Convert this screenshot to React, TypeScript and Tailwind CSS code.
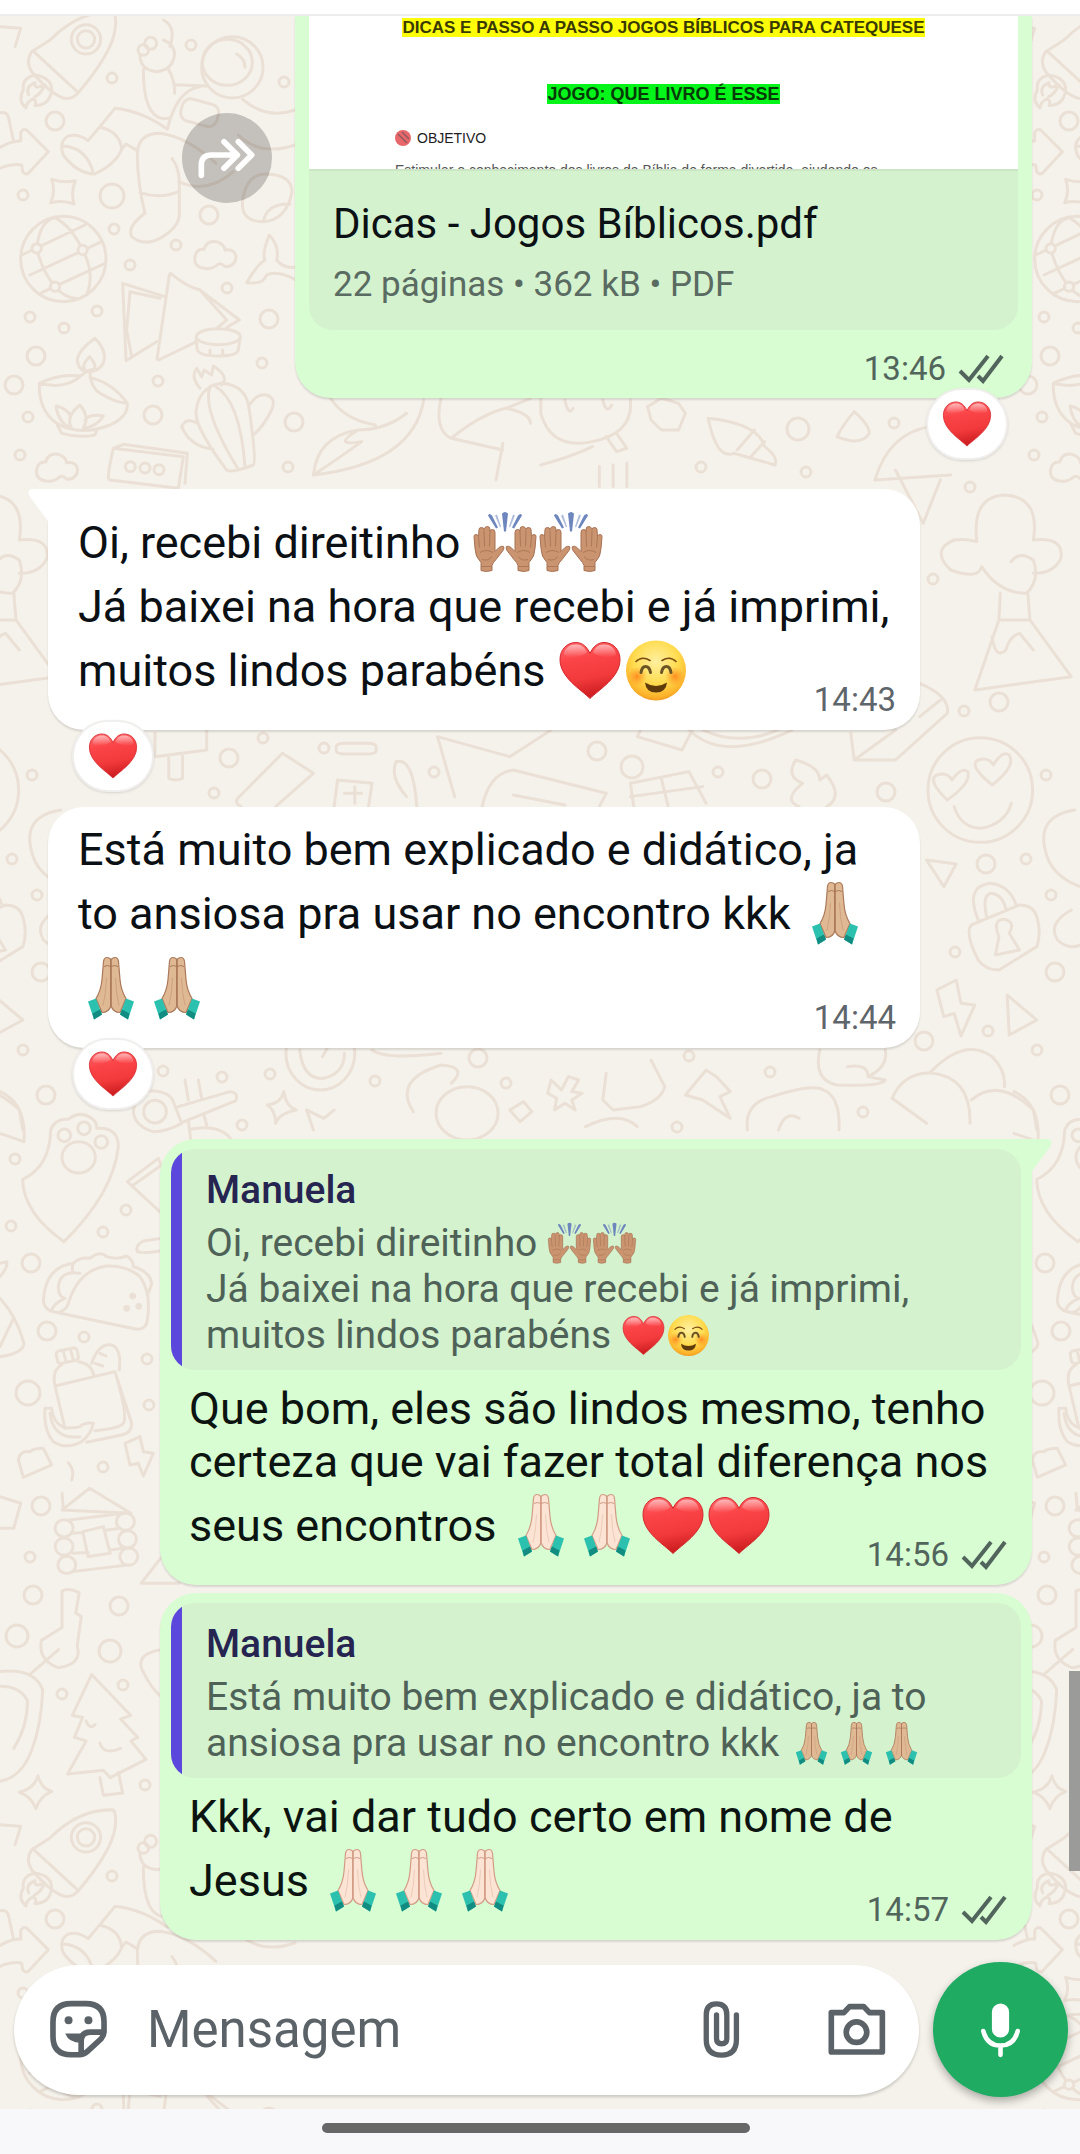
import type { ReactNode } from 'react';

const rings: [number, number, number][] = [
  [112, 78, 5], [191, 45, 5], [284, 82, 5], [23, 195, 5], [114, 229, 5], [176, 245, 5], [130, 265, 5], [227, 288, 5],
  [30, 317, 5], [64, 328, 5], [97, 311, 5], [262, 363, 5], [158, 381, 5], [28, 417, 5], [20, 455, 5], [288, 467, 5],
  [55, 121, 9], [209, 215, 9], [269, 319, 9], [36, 356, 9], [14, 385, 9], [153, 415, 9], [294, 422, 9], [112, 196, 12],
  [798, 429, 11], [894, 423, 5], [701, 467, 5], [806, 472, 5], [970, 487, 5], [933, 579, 5], [999, 702, 9], [964, 711, 5],
  [263, 738, 5], [324, 748, 5], [229, 758, 9], [434, 772, 5], [597, 751, 9], [632, 767, 11], [718, 772, 5], [762, 779, 9],
  [886, 792, 9], [214, 793, 5], [32, 775, 5], [986, 864, 9], [12, 859, 5], [37, 895, 5], [955, 952, 5], [41, 972, 9],
  [988, 1031, 5], [924, 1041, 9], [23, 1050, 5], [163, 1071, 5], [222, 1077, 5], [270, 1074, 5], [375, 1081, 5],
  [506, 1083, 5], [478, 1058, 9], [689, 1056, 5], [770, 1072, 5], [863, 1112, 5], [242, 1125, 5], [677, 1127, 5],
  [46, 1095, 9], [15, 1159, 5], [126, 1210, 5], [11, 1226, 5], [103, 1232, 5], [31, 1263, 9], [47, 1331, 9], [84, 1337, 5],
  [147, 1359, 5], [28, 1393, 12], [149, 1405, 5], [103, 1467, 5], [41, 1506, 9], [30, 1557, 5], [33, 1595, 9],
  [119, 1606, 9], [17, 1636, 11], [110, 1651, 11], [62, 1694, 5], [123, 1685, 5], [145, 1785, 5],
];

function Doodles() {
  return (
    <g id="doodles">
      {rings.map(([x, y, r]) => (
        <circle key={`${x}-${y}`} cx={x} cy={y} r={r} />
      ))}

      {/* rocket, astronaut, globe, samosas, diya, cactus, cassette */}
      <g transform="translate(0 40) scale(.33333)">
        <path d="M341 -84Q240 -90 150 0L95 35Q75 65 95 95Q150 160 190 174Q215 180 235 158Q335 40 345 -30Q350 -70 341 -84zM98 32L235 158" />
        <circle cx="258" cy="-2" r="44" />
        <circle cx="258" cy="-2" r="26" />
        <path d="M78 204Q52 182 70 150Q65 110 110 106Q155 115 155 150Q150 195 105 197Q112 184 100 176Q80 185 78 204zM86 165Q75 140 105 128Q100 150 135 135Q120 165 104 170" />
        <circle cx="430" cy="30" r="16" />
        <circle cx="452" cy="10" r="18" />
        <path d="M420 45Q420 90 470 95Q520 90 524 40Q520 10 490 0M430 88Q430 230 490 236L512 234M505 88Q525 120 524 160M524 134L620 138M490 -60Q530 -40 510 20" />
        <circle cx="697" cy="82" r="92" />
        <ellipse cx="682" cy="67" rx="75" ry="69" />
        <path d="M710 42Q735 55 735 82M600 140Q530 150 502 268Q430 215 345 205Q300 260 264 302Q235 280 205 288Q175 305 190 345Q230 400 285 402Q350 370 365 328M300 262Q360 275 365 328L378 312L412 332M186 318Q260 320 280 400" />
        <rect x="543" y="184" width="112" height="68" rx="25" transform="rotate(15 598 218)" />
        <path d="M412 340Q415 280 480 280Q560 290 648 370M412 340Q412 430 435 520Q380 560 395 590Q430 620 480 595Q540 560 538 520L538 420Q535 380 516 356M420 458Q480 478 536 455M536 425Q620 465 700 395M715 285Q780 350 885 315M728 178Q800 240 885 210M728 480Q740 400 800 402Q875 405 876 455Q860 540 790 545Q720 545 728 480M790 545Q800 490 870 492" />
        <path d="M0 385Q35 370 65 375L68 395Q75 405 85 400L145 335L80 270Q65 265 62 280L62 303Q40 300 0 322M0 218Q20 215 25 230L40 300M155 418Q190 430 226 422Q212 455 222 492Q190 480 152 488Q168 455 155 418z" />
        <circle cx="190" cy="657" r="128" />
        <path d="M65 645L255 555M90 705L305 605M120 760L315 670M110 625Q120 540 165 533M110 625Q125 690 165 740Q195 775 235 776M165 533Q215 560 248 630Q285 700 262 760" />
        <g fill="#f5f2eb">
          <circle cx="110" cy="625" r="14" />
          <circle cx="248" cy="630" r="14" />
          <circle cx="165" cy="740" r="14" />
        </g>
        <path id="cloud" d="M612 685Q580 680 585 650Q590 625 612 628Q620 600 650 605Q672 612 675 630Q705 625 708 652Q705 680 675 680Q665 668 655 672Q635 690 612 685z" />
        <use href="#cloud" x="-475" y="638" />
        <path d="M740 728Q775 670 795 660Q785 640 808 585Q840 620 830 660Q850 685 885 682M740 728Q790 735 800 705Q830 690 885 718" />
        <path d="M495 770L368 730L378 962L470 905M480 775L390 755L380 870L395 950M590 905L476 960Q470 960 472 950L508 705L512 700Q560 740 600 750L718 840L680 862M600 750L680 840L650 865" />
        <ellipse cx="655" cy="890" rx="66" ry="24" />
        <path d="M588 895L592 930Q600 948 655 948Q710 948 715 930L720 895M630 930V945M668 930V945" />
        <path d="M258 992Q250 1008 235 1008Q180 1000 118 1030Q115 1110 170 1150Q240 1190 330 1155Q385 1130 382 1090Q350 1090 300 1060Q270 1040 270 995M118 1030Q200 1050 245 1005M270 1012Q340 1030 382 1090M285 895Q230 935 232 965Q240 1000 275 995Q315 985 313 945Q310 920 285 895zM268 950Q240 980 258 992Q290 990 284 975Q280 960 268 950M168 1098Q175 1150 215 1165Q195 1130 240 1095Q270 1130 250 1165Q290 1160 310 1128Q270 1120 255 1140M168 1098Q200 1105 210 1125M172 1155L185 1180Q240 1195 285 1185L290 1172" />
        <path d="M640 1035Q590 1060 588 1120Q590 1170 680 1290Q695 1300 760 1275Q770 1265 748 1110Q740 1035 665 1030L640 1035M630 1040Q605 1110 715 1288M645 1038Q720 1080 735 1280M600 1045Q570 1010 590 985L605 1010L612 990L635 1005L640 978Q690 1010 665 1035M748 1095Q770 1060 800 1065Q830 1075 815 1110Q790 1160 760 1185M592 1150Q560 1130 545 1160Q570 1220 640 1228" />
        <path d="M325 1315Q325 1290 340 1225L550 1250L535 1345L330 1320zM340 1225L370 1213L562 1240L555 1330" />
        <circle cx="391" cy="1280" r="15" />
        <circle cx="435" cy="1284" r="15" />
        <circle cx="477" cy="1289" r="15" />
      </g>

      {/* row under the first bubble */}
      <g transform="scale(.6889 .3333)">
        <path d="M0 80L30 85L22 140M455 1425Q460 1310 520 1290Q560 1290 590 1240M455 1425Q600 1390 615 1200M480 1195Q500 1260 545 1275M520 1290Q480 1340 525 1325Q495 1370 455 1425M640 1195Q630 1290 655 1315Q700 1240 735 1225Q770 1240 770 1270M655 1315L730 1350M720 1440L730 1330M770 1195L735 1225M785 1195L785 1240Q800 1350 860 1325Q920 1300 915 1200M820 1200Q825 1250 832 1225M875 1200Q880 1245 888 1215M880 1310L895 1355L910 1345L895 1300M940 1220L960 1195L985 1210L995 1240L985 1290L960 1290L945 1260zM1028 1255Q1040 1380 1065 1360L1125 1395Q1130 1370 1110 1340Q1100 1270 1028 1255M1070 1350L1095 1290M1090 1370L1110 1325M785 1395Q830 1370 860 1340M870 1460V1400M890 1460V1395M910 1460V1390M1215 1310Q1225 1270 1240 1235Q1262 1275 1262 1300Q1250 1340 1215 1310M1270 1440Q1290 1300 1350 1280M1270 1440L1380 1425" />
      </g>

      {/* tree, smiley, plane, gift, flame */}
      <g transform="translate(0 470) scale(.6889 .3333)">
        <path d="M1425 290Q1420 330 1380 300Q1350 240 1385 210Q1400 205 1418 215Q1410 80 1458 75Q1510 80 1500 210Q1545 200 1540 265Q1530 310 1500 310M1425 290Q1450 370 1490 370Q1510 330 1500 270Q1480 240 1468 275M1452 370L1450 450L1415 660L1555 620L1495 450L1492 370M1452 450H1492M1440 500Q1445 570 1460 540Q1465 500 1480 490L1500 540M1300 0L1340 160L1365 30M1300 780L1240 870L1235 790M1240 870L1300 870L1375 730Q1380 680 1335 640M1335 740L1365 690" />
        <ellipse cx="1423" cy="960" rx="76" ry="157" />
        <path d="M1375 990Q1345 930 1360 915Q1375 905 1382 930Q1395 890 1405 905Q1410 940 1375 990M1440 945Q1405 885 1420 870Q1435 860 1442 885Q1455 840 1465 855Q1475 890 1440 945M1385 1010Q1395 1075 1425 1075Q1460 1060 1468 1000" />
        <path d="M300 780L300 840L225 860V790M245 860V925Q255 935 265 925V855M350 1010Q340 1000 345 985L410 850L455 910L400 1010M485 1010L490 930L540 940L535 1010M515 950V1000M500 970H525M605 1010Q600 860 575 875Q565 920 590 980M660 980L635 800L740 860L800 780M870 1010L880 970L745 900Q710 910 700 1010M745 975L820 1005M1000 780Q1050 880 1150 780M1020 780Q1070 830 1130 780M920 1010L915 940L1000 905L1025 1000M960 925L970 1010M915 980L1020 950M1160 1010Q1135 990 1165 940Q1140 920 1155 870Q1190 890 1190 930L1200 915Q1225 980 1200 1010M930 780L925 800L990 840L1005 780" />
        <rect x="488" y="820" width="58" height="32" rx="10" />
      </g>

      {/* padlock, bolt, clock, fruit, hats */}
      <g transform="translate(0 790) scale(.6889 .3333)">
        <path d="M1410 405L1480 345Q1500 345 1505 380Q1512 430 1505 470L1450 540Q1430 540 1420 510Q1400 430 1410 405zM1420 390Q1400 290 1437 280Q1465 285 1475 345M1432 380Q1425 310 1440 310Q1455 315 1460 355M1450 440L1445 495L1480 480L1465 430M1450 440Q1440 390 1457 388Q1475 395 1465 430M1345 210L1388 222L1370 290zM1360 600L1388 570L1395 640L1415 645L1395 738L1385 670L1370 680zM1462 615L1505 690L1465 735zM1555 360Q1520 400 1535 450Q1550 480 1568 465M1560 60Q1500 80 1520 200Q1530 260 1568 290" />
        <ellipse cx="465" cy="790" rx="50" ry="110" />
        <path d="M435 780Q440 870 470 865Q500 850 500 790M475 775L468 800M600 965Q570 870 640 825Q680 830 655 880M412 905Q415 950 430 960Q405 970 400 1000Q400 960 388 945Q408 940 412 905zM800 870L815 900L825 860L840 870L830 905L845 910L830 930L835 960L820 940L805 960L808 925L795 910zM1025 840L995 915L1020 930L1060 985L1045 920L1060 905L1040 860zM1295 925Q1310 850 1350 848Q1410 860 1408 1000M1295 925L1345 1000M1410 930Q1450 860 1500 960L1505 1020M1350 848Q1400 740 1440 800Q1460 840 1458 890M1190 780Q1180 870 1215 885Q1280 890 1285 870L1260 860Q1290 830 1285 780M1230 830Q1260 820 1260 860M1085 1020Q1080 940 1120 920Q1180 880 1195 900Q1220 920 1218 1020M1130 1020Q1140 960 1160 985M540 780Q560 810 640 790M880 850L875 930L890 960L930 950Q960 930 965 890L945 810M850 1010Q900 960 925 1010M740 960L760 935L772 965L755 995zM445 960L455 1020M445 960L470 985L485 960" />
        <ellipse cx="678" cy="970" rx="45" ry="80" />
      </g>

      {/* paw, scissors, taco, lunch bag */}
      <g transform="translate(0 1080) scale(.33333)">
        <path d="M68 298Q150 260 152 150Q165 115 205 118Q240 90 275 115Q290 125 290 145Q355 140 355 200Q340 340 192 485Q70 400 68 298z" />
        <circle cx="193" cy="166" r="19" />
        <circle cx="252" cy="145" r="19" />
        <circle cx="304" cy="186" r="19" />
        <ellipse cx="236" cy="232" rx="50" ry="47" />
        <circle cx="465" cy="95" r="34" />
        <path d="M0 35Q80 70 72 185L0 160M400 95Q405 40 455 32Q510 35 520 65L545 130Q500 155 460 155Q405 140 400 95M535 80L690 35Q715 35 708 62L545 128M555 0L565 60M595 0L605 55M565 120L572 180M612 105L620 135M570 148Q660 130 695 180M485 260L475 235L382 305L485 400M400 315L485 255M485 475L430 483Q405 495 412 515Q425 522 485 512" />
        <path d="M130 665Q135 560 220 550Q240 530 270 535Q300 510 320 530Q350 540 380 528Q400 540 400 560Q450 575 455 610Q450 630 442 645M130 665Q135 690 160 695L410 748Q440 748 442 720Q455 640 420 590Q380 555 320 558Q235 570 205 670Q200 690 175 698M220 550Q215 565 218 578M240 580Q180 570 175 620Q175 650 195 655Q160 670 155 692" />
        <g fill="#ebe0d5" stroke="none">
          <circle cx="398" cy="648" r="10" />
          <circle cx="380" cy="685" r="10" />
          <circle cx="416" cy="679" r="10" />
        </g>
        <path d="M195 1045L165 918L345 875L395 1030Q395 1060 365 1065L260 1087M345 875Q385 1010 370 1030Q360 1045 285 1052M165 918Q155 870 185 855M235 845Q275 850 282 888M275 850Q295 790 335 795Q365 805 358 870M300 820L318 828M285 850L308 858M135 985L155 985Q165 1060 240 1040Q255 1025 280 1030Q275 1060 245 1085Q200 1110 160 1085Q130 1050 135 985M150 1000Q160 1080 240 1070M190 815L198 845M212 810L220 840" />
        <rect x="170" y="808" width="64" height="38" rx="10" transform="rotate(-12 202 827)" />
        <path d="M55 1140Q60 1110 90 1115Q100 1105 130 1105L155 1155L70 1192zM375 1090L420 1070L430 1115L460 1120L430 1188L415 1150L390 1155zM205 1148Q225 1170 215 1200M0 590Q25 560 20 545L0 550M0 655Q50 710 72 790Q70 820 0 830M38 720L0 800" />
      </g>

      {/* log cabin */}
      <g transform="translate(0 1120) scale(.6889 .3333)">
        <path d="M130 1105L90 1170L190 1180zM100 1200L180 1180M105 1240L120 1238M155 1230L175 1225M105 1300L128 1298M160 1290L178 1285M120 1235L150 1220L160 1300L128 1310zM105 1355L185 1335M90 1120L92 1170M0 1130L30 1150L20 1225H0M235 1310L205 1390H260" />
        <ellipse cx="93" cy="1225" rx="13" ry="26" />
        <ellipse cx="93" cy="1280" rx="13" ry="26" />
        <ellipse cx="97" cy="1335" rx="13" ry="26" />
        <ellipse cx="182" cy="1205" rx="13" ry="26" />
        <ellipse cx="185" cy="1258" rx="13" ry="26" />
        <ellipse cx="187" cy="1310" rx="13" ry="26" />
      </g>

      {/* key, guitar, pine */}
      <g transform="translate(0 1580) scale(.6889 .366)">
        <path d="M90 30Q100 20 115 35L110 90L118 100L112 180Q120 230 85 240Q55 220 60 165L90 130zM85 190L45 255M0 250Q50 240 62 300Q60 400 45 470Q30 540 0 550M0 290Q30 290 40 330Q40 400 20 460M133 258L105 370L120 375L108 430L125 440L98 530L150 520L160 540L212 490L190 440L200 430L175 380L190 370zM145 540L150 588L178 582L172 525M125 385Q130 410 138 395M145 445Q150 480 175 460M55 535Q60 570 75 578Q58 590 52 625Q45 590 28 580Q50 570 55 535M235 190Q200 200 205 240Q220 300 235 320" />
      </g>
    </g>
  );
}

function Wallpaper() {
  return (
    <svg
      aria-hidden="true"
      className="absolute inset-0 -z-10 size-full [&_*]:[vector-effect:non-scaling-stroke]"
      fill="none"
      stroke="#ebe0d5"
      strokeWidth="3"
      strokeLinecap="round"
      strokeLinejoin="round"
    >
      <g transform="translate(0 -16)">
        <Doodles />
        <use href="#doodles" x="1014" />
        <use href="#doodles" x="-1014" />
        <use href="#doodles" y="1798" />
        <use href="#doodles" x="1014" y="1798" />
      </g>
    </svg>
  );
}

const emojiSize = {
  lg: 'inline-block h-[75px] w-[66px] align-[-22px]',
  md: 'inline-block h-[45px] w-[45px] align-[-10px]',
  sm: 'block size-[52px]',
};
type Size = keyof typeof emojiSize;

function Heart({ size = 'lg' }: { size?: Size }) {
  return (
    <svg viewBox="0 0 66 66" className={emojiSize[size]} role="img" aria-label="coração">
      <defs>
        <linearGradient id="heart" x1="0" y1="0" x2="0.2" y2="1">
          <stop offset="0" stopColor="#ff6a6e" />
          <stop offset=".35" stopColor="#fb4447" />
          <stop offset=".7" stopColor="#f23a3c" />
          <stop offset="1" stopColor="#cf1f22" />
        </linearGradient>
        <linearGradient id="shine" x1="0" y1="0" x2="0" y2="1">
          <stop offset="0" stopColor="#fff" stopOpacity=".55" />
          <stop offset="1" stopColor="#fff" stopOpacity="0" />
        </linearGradient>
      </defs>
      <path
        d="M33 61C24 52 3 40 3 22C3 12 10 5 19 5C25 5 30 9 33 16C36 9 41 5 47 5C56 5 63 12 63 22C63 40 42 52 33 61z"
        fill="url(#heart)"
        stroke="#d4262c"
        strokeWidth="1"
      />
      <path d="M7 17C8 10 13 7 19 7C25 7 28 10 30 15C24 20 12 22 7 17zM59 17C58 10 53 7 47 7C41 7 38 10 36 15C42 20 54 22 59 17z" fill="url(#shine)" />
    </svg>
  );
}

function Smile({ size = 'lg' }: { size?: Size }) {
  return (
    <svg viewBox="0 0 66 66" className={emojiSize[size]} role="img" aria-label="rosto sorridente">
      <defs>
        <radialGradient id="face" cx=".5" cy=".35" r=".68">
          <stop offset="0" stopColor="#fff0a0" />
          <stop offset=".55" stopColor="#ffdb4e" />
          <stop offset=".85" stopColor="#fdb52c" />
          <stop offset="1" stopColor="#ee9420" />
        </radialGradient>
        <radialGradient id="cheek">
          <stop offset="0" stopColor="#ff8a1e" stopOpacity=".95" />
          <stop offset="1" stopColor="#ff9a2a" stopOpacity="0" />
        </radialGradient>
      </defs>
      <circle cx="33" cy="33" r="30" fill="url(#face)" />
      <circle cx="14" cy="39" r="10" fill="url(#cheek)" />
      <circle cx="52" cy="39" r="10" fill="url(#cheek)" />
      <g fill="none" stroke="#7a4a10" strokeLinecap="round">
        <path d="M13 24Q19 18 27 23M53 24Q47 18 39 23" strokeWidth="1.6" />
        <path d="M18 35Q19 29 22.500 29Q26.500 29 27.500 35M48 35Q47 29 43.500 29Q39.500 29 38.500 35" stroke="#6b5526" strokeWidth="3" />
      </g>
      <path d="M22 45Q33 52 44 45Q43 55 33 55Q23 55 22 45z" fill="#5f3a0a" />
    </svg>
  );
}

const hand = 'M9 61V53Q3 47 3 39L2 27Q2 25 4 25Q6 25 6.500 27L7 20Q7 18 9.500 18Q12 18 12 20L12.500 19Q13 17 15.500 17Q18 17 18 20V22Q18 20 20.500 20Q23 20 23 23V42L27 38Q30 36 31.500 37Q32.500 38 31 41L24 50Q21 53 20 56V61Q14 63 9 61z';

function RaisedHands({ size = 'lg' }: { size?: Size }) {
  return (
    <svg viewBox="0 0 66 66" className={emojiSize[size]} role="img" aria-label="mãos levantadas">
      <g fill="#6d86bd">
        <path d="M30 4Q33 1 36 4L34 22H32z" />
        <path d="M16 6Q17 3 20 6L26 18L24 19zM50 6Q49 3 46 6L40 18L42 19z" />
        <path d="M23 6L25 5L29 17L28 18zM43 6L41 5L37 17L38 18z" opacity=".55" />
      </g>
      {['', 'translate(66 0) scale(-1 1)'].map((flip) => (
        <g key={flip} transform={flip || undefined}>
          <path d={hand} fill="#c9946f" stroke="#a87253" strokeWidth="1" strokeLinejoin="round" />
          <path d="M6.500 27L7.500 38M12 21L12.500 37M18 22L17.500 37M8 43Q14 39 21 43M10 50Q16 52 20 47M9 57H20" fill="none" stroke="#ad7858" strokeWidth="1" />
        </g>
      ))}
    </svg>
  );
}

function Pray({ size = 'lg', tone = 'light' }: { size?: Size; tone?: 'light' | 'tan' }) {
  const skin = tone === 'light' ? '#fbe4d4' : '#dfb993';
  const line = tone === 'light' ? '#d29b85' : '#ab795a';
  return (
    <svg viewBox="0 0 66 66" className={emojiSize[size]} role="img" aria-label="mãos em oração">
      {['', 'translate(66 0) scale(-1 1)'].map((flip) => (
        <g key={flip} transform={flip || undefined}>
          <path
            d="M33 4Q31 2 29 2Q26 2 25.500 6L24 24Q23 35 18 43L24 57Q31 57 33 50z"
            fill={skin}
            stroke={line}
            strokeWidth="1.2"
            strokeLinejoin="round"
          />
          <path d="M26 11Q29 9 33 11M33 4V50" fill="none" stroke={line} strokeWidth="1" />
          <path d="M28.500 22Q28 38 25 50" fill="none" stroke={line} strokeWidth="1" opacity=".35" />
          <path d="M10 46L18 43L24 59L16 64z" fill="#2cc0ae" />
          <path d="M14.500 58L22 54L24 59L16 64z" fill="#128c80" />
        </g>
      ))}
    </svg>
  );
}

function Reaction({ side }: { side: 'left' | 'right' }) {
  return (
    <button
      type="button"
      aria-label="Ver reações"
      className={`absolute -bottom-[62px] flex h-[72px] w-[82px] items-center justify-center rounded-full border-2 border-[#f1efed] bg-white shadow-sm ${
        side === 'left' ? 'left-6' : 'right-6'
      }`}
    >
      <Heart size="sm" />
    </button>
  );
}

function Time({ value, sent = false }: { value: string; sent?: boolean }) {
  return (
    <span className={`flex items-center justify-end gap-3 text-[33px] leading-[38px] ${sent ? 'text-[#52655c]' : 'text-[#5f666b]'}`}>
      <time>{value}</time>
      {sent && (
        <svg width="46" height="30" viewBox="0 0 46 30" fill="none" stroke="currentColor" strokeWidth="4" role="img" aria-label="entregue">
          <path d="M2 17L11 26L30 2M20 22L25 27L44 2" />
        </svg>
      )}
    </span>
  );
}

function Received({ time, tail = false, children }: { time: string; tail?: boolean; children: ReactNode }) {
  return (
    <article className="relative w-full max-w-[872px] rounded-[36px] bg-white px-[30px] pt-4 pb-[11px] shadow-[0_2px_2px_rgba(0,0,0,0.12)]">
      {tail && (
        <svg className="absolute top-0 -left-5" width="60" height="36" viewBox="0 0 60 36" fill="#fff" aria-hidden="true">
          <path d="M60 0H4Q-2 1 2 8L20 32V36H60z" />
        </svg>
      )}
      <p className="relative flow-root text-[45px] leading-[53px] text-[#0b1014]">
        {children}
        <span className="float-right mt-12 -mr-1.5">
          <Time value={time} />
        </span>
      </p>
      <Reaction side="left" />
    </article>
  );
}

function Sent({ time, tail = false, quote, children }: { time: string; tail?: boolean; quote: ReactNode; children: ReactNode }) {
  return (
    <article className="relative ml-auto w-full max-w-[872px] rounded-[36px] bg-[#d8fdd2] px-[11px] pt-2.5 pb-[11px] shadow-[0_2px_2px_rgba(0,0,0,0.12)]">
      {tail && (
        <svg className="absolute top-0 -right-5" width="60" height="36" viewBox="0 0 60 36" fill="#d8fdd2" aria-hidden="true">
          <path d="M0 0H56Q62 1 58 8L40 32V36H0z" />
        </svg>
      )}
      <blockquote className="relative flex overflow-hidden rounded-3xl bg-[#d4f2ce]">
        <div className="w-[11px] shrink-0 bg-[#5b47dc]" />
        <div className="px-6 pt-[18px] pb-3 text-[39px] leading-[46px] text-[#4f6258]">
          <h2 className="mb-[7px] font-medium text-[#262450]">Manuela</h2>
          <p>{quote}</p>
        </div>
      </blockquote>
      <p className="mt-3 flow-root px-[18px] text-[45px] leading-[53px] text-[#0b1410]">
        {children}
        <span className="float-right mt-12 -mr-1">
          <Time value={time} sent />
        </span>
      </p>
    </article>
  );
}

function DocumentMessage() {
  return (
    <div className="flex items-start justify-end gap-[23px]">
      <button type="button" aria-label="Encaminhar" className="mt-[97px] size-[90px] shrink-0 rounded-full bg-black/20">
        <svg viewBox="546 219 270 270" fill="none" stroke="#fff" strokeWidth="17" strokeLinecap="round" strokeLinejoin="round">
          <path d="M604 406V375Q604 345 635 345H710M672 305L712 345L672 385M715 305L755 345L715 385" />
        </svg>
      </button>
      <article className="relative w-full max-w-[737px] rounded-b-[36px] bg-[#d8fdd2] px-3.5 pb-2.5 shadow-[0_2px_2px_rgba(0,0,0,0.12)]">
        <div className="h-[153px] overflow-hidden bg-white font-['Liberation_Sans',Arial,sans-serif] text-[#1d1d1d]">
          <p className="pt-0.5 text-center text-[17px] leading-5 font-bold">
            <mark className="bg-[#fdfd0a] text-[#3a3a00]">DICAS E PASSO A PASSO JOGOS BÍBLICOS PARA CATEQUESE</mark>
          </p>
          <p className="pt-[46px] text-center text-lg leading-5 font-bold">
            <mark className="bg-[#05f51a] text-[#063a06]">JOGO: QUE LIVRO É ESSE</mark>
          </p>
          <div className="flex items-center gap-1.5 px-[86px] pt-6 text-sm leading-5">
            <svg width="16" height="16" viewBox="0 0 16 16" aria-hidden="true">
              <circle cx="8" cy="8" r="8" fill="#e8676a" />
              <path d="M3 4L12 13M7 2L14 9" stroke="#8f5a60" strokeWidth="1.5" />
            </svg>
            OBJETIVO
          </div>
          <p className="px-[86px] pt-3 text-sm leading-5 whitespace-nowrap text-[#555]">
            Estimular o conhecimento dos livros da Bíblia de forma divertida, ajudando os
          </p>
        </div>
        <div className="h-[161px] rounded-b-3xl border-t-2 border-[#cbe5c5] bg-[#d4f2ce] px-6 pt-[26px]">
          <h2 className="text-[42px] leading-[53px] text-[#0b1014]">Dicas - Jogos Bíblicos.pdf</h2>
          <p className="pt-3 text-[35px] leading-[46px] text-[#5a6b62]">22 páginas • 362 kB • PDF</p>
        </div>
        <div className="mt-5 mr-3.5">
          <Time value="13:46" sent />
        </div>
        <Reaction side="right" />
      </article>
    </div>
  );
}

function Composer() {
  return (
    <form className="flex items-center gap-3.5 pr-3 pb-3 pl-3.5" onSubmit={(e) => e.preventDefault()}>
      <div className="flex h-[130px] min-w-0 flex-1 items-center rounded-full bg-white pr-8 pl-[34px] text-[#5b6368] shadow-[0_2px_3px_rgba(0,0,0,0.18)]">
        <button type="button" aria-label="Figurinhas" className="shrink-0">
          <svg width="61" height="61" viewBox="145 148 184 184" fill="none" stroke="currentColor" strokeWidth="17">
            <path d="M240 316H215Q160 316 160 261V217Q160 162 215 162H259Q314 162 314 217V246Q314 258 306 267L264 306Q253 316 240 316zM245 312V275Q245 248 272 248H314" />
            <path d="M197 252H252L245 280Q207 280 197 252z" fill="currentColor" stroke="none" />
            <circle cx="207" cy="212" r="12" fill="currentColor" stroke="none" />
            <circle cx="267" cy="212" r="12" fill="currentColor" stroke="none" />
          </svg>
        </button>
        <input
          type="text"
          aria-label="Mensagem"
          placeholder="Mensagem"
          className="ml-[38px] min-w-0 flex-1 bg-transparent text-[51px] leading-[60px] outline-none placeholder:text-[#5b6368]"
        />
        <button type="button" aria-label="Anexar" className="mr-[83px] shrink-0">
          <svg width="43" height="63" viewBox="60 175 128 190" fill="none" stroke="currentColor" strokeWidth="16" strokeLinecap="round">
            <path d="M169 226V300Q169 347 124 347Q78 347 78 300V226Q78 193 109 193Q140 193 140 226V298Q140 313 124 313Q109 313 109 298V226" />
          </svg>
        </button>
        <button type="button" aria-label="Câmera" className="shrink-0">
          <svg width="61" height="57" viewBox="436 182 184 170" fill="none" stroke="currentColor" strokeWidth="17" strokeLinejoin="round">
            <path d="M452 335V216H490L507 198H550L567 216H606V335z" />
            <circle cx="528" cy="275" r="31" />
          </svg>
        </button>
      </div>
      <button
        type="button"
        aria-label="Gravar áudio"
        className="flex size-[135px] shrink-0 items-center justify-center rounded-full bg-[#1fab61] shadow-[0_4px_8px_rgba(0,0,0,0.3)]"
      >
        <svg width="45" height="60" viewBox="895 175 136 180" fill="none" stroke="#fff" strokeWidth="14" strokeLinecap="round">
          <rect x="937" y="185" width="52" height="103" rx="26" fill="#fff" stroke="none" />
          <path d="M911 268Q922 312 963 312Q1004 312 1015 268M963 314V340" />
        </svg>
      </button>
    </form>
  );
}

export default function App() {
  return (
    <main className="flex min-h-screen flex-col bg-white font-[Roboto,sans-serif]">
      <header className="h-4 border-b-2 border-[#eeeceb] bg-white" />

      <div className="relative isolate flex flex-1 flex-col overflow-hidden bg-[#f5f2eb]">
        <Wallpaper />

        <section aria-label="Conversa" className="flex-1 px-12">
          <DocumentMessage />

          <div className="mt-[91px]">
            <Received time="14:43" tail>
              Oi, recebi direitinho <RaisedHands />
              <RaisedHands />
              <br />
              Já baixei na hora que recebi e já imprimi, muitos lindos parabéns <Heart />
              <Smile />
            </Received>
          </div>

          <div className="mt-[77px]">
            <Received time="14:44">
              Está muito bem explicado e didático, ja to ansiosa pra usar no encontro kkk <Pray tone="tan" />
              <Pray tone="tan" />
              <Pray tone="tan" />
            </Received>
          </div>

          <div className="mt-[91px]">
            <Sent
              time="14:56"
              tail
              quote={
                <>
                  Oi, recebi direitinho <RaisedHands size="md" />
                  <RaisedHands size="md" />
                  <br />
                  Já baixei na hora que recebi e já imprimi, muitos lindos parabéns <Heart size="md" />
                  <Smile size="md" />
                </>
              }
            >
              Que bom, eles são lindos mesmo, tenho certeza que vai fazer total diferença nos seus encontros <Pray />
              <Pray />
              <Heart />
              <Heart />
            </Sent>
          </div>

          <div className="mt-2 mb-[22px]">
            <Sent
              time="14:57"
              quote={
                <>
                  Está muito bem explicado e didático, ja to ansiosa pra usar no encontro kkk <Pray size="md" tone="tan" />
                  <Pray size="md" tone="tan" />
                  <Pray size="md" tone="tan" />
                </>
              }
            >
              Kkk, vai dar tudo certo em nome de Jesus <Pray />
              <Pray />
              <Pray />
            </Sent>
          </div>
        </section>

        {/* Scroll thumb */}
        <div className="absolute right-0 bottom-[238px] h-[200px] w-[11px] bg-[#9b9b99]" />

        <Composer />
      </div>

      <footer className="flex h-[45px] justify-center bg-[#f8f8fb] pt-3.5 pr-2">
        <div className="h-2.5 w-[428px] rounded-full bg-[#676767]" />
      </footer>
    </main>
  );
}
